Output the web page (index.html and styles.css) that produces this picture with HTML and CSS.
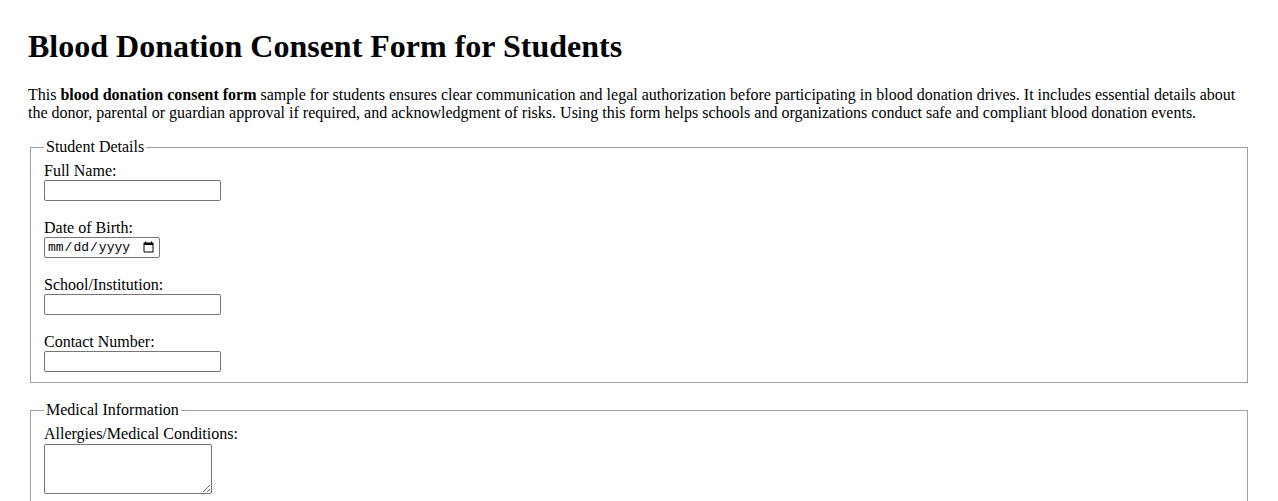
FILE: index.html
```html
<!DOCTYPE html>
<html lang="en">
<head>
<meta charset="utf-8">
<title>Blood Donation Consent Form for Students</title>
<link rel="stylesheet" href="styles.css">
</head>
<body>
<h1 class="title">Blood Donation Consent Form for Students</h1>
<p class="intro">This <strong>blood donation consent form</strong> sample for students ensures clear communication and legal authorization before participating in blood donation drives. It includes essential details about the donor, parental or guardian approval if required, and acknowledgment of risks. Using this form helps schools and organizations conduct safe and compliant blood donation events.</p>
<form class="form">
  <fieldset class="group">
    <legend class="group-title">Student Details</legend>
    <label class="field-label" for="name">Full Name:</label><br>
    <input class="text-input" type="text" id="name"><br><br>
    <label class="field-label" for="dob">Date of Birth:</label><br>
    <input class="date-input" type="date" id="dob"><br><br>
    <label class="field-label" for="school">School/Institution:</label><br>
    <input class="text-input" type="text" id="school"><br><br>
    <label class="field-label" for="phone">Contact Number:</label><br>
    <input class="text-input" type="tel" id="phone">
  </fieldset>
  <fieldset class="group">
    <legend class="group-title">Medical Information</legend>
    <label class="field-label" for="allergies">Allergies/Medical Conditions:</label><br>
    <textarea class="area-input" id="allergies"></textarea><br><br>
    <label class="field-label" for="meds">Current Medications:</label><br>
    <textarea class="area-input" id="meds"></textarea>
  </fieldset>
</form>
</body>
</html>
```

FILE: styles.css
```css
html {
  background: #fff;
}
body {
  margin: 28px;
  font-family: "Liberation Serif", "Times New Roman", serif;
  font-size: 16px;
  color: #000;
}
.title {
  font-size: 32px;
  font-weight: bold;
  margin: 0 0 21px;
}
.intro {
  margin: 16px 0;
  line-height: 18px;
}
.form {
  margin: 0;
}
.group {
  margin: 0 2px 18px;
  padding: 6px 12px 10px 13px;
  border: 1px solid #a0a0a0;
}
.group-title {
  padding: 0 2px;
  line-height: 18px;
}
.field-label {
  line-height: 18px;
}
.text-input {
  box-sizing: border-box;
  width: 177px;
  height: 21px;
  border: 1px solid #767676;
  border-radius: 2px;
  padding: 1px 2px;
  vertical-align: bottom;
}
.date-input {
  box-sizing: border-box;
  width: 116px;
  height: 21px;
  border: 1px solid #767676;
  border-radius: 2px;
  padding: 1px 2px;
  font-family: "Liberation Mono", "DejaVu Sans Mono", monospace;
  font-size: 13px;
  vertical-align: bottom;
}
.area-input {
  box-sizing: border-box;
  width: 168px;
  height: 50px;
  margin-top: 1px;
  border: 1px solid #767676;
  border-radius: 2px;
  vertical-align: bottom;
}
```
